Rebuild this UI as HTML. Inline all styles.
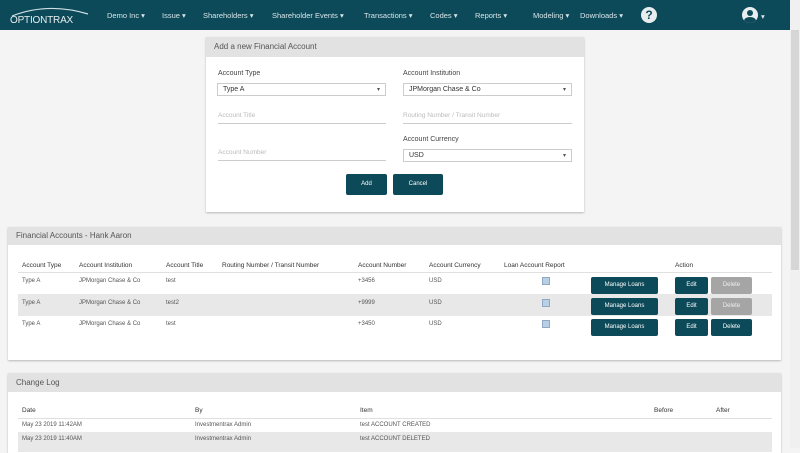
<!DOCTYPE html>
<html><head><style>
*{box-sizing:border-box;margin:0;padding:0}
body{width:800px;height:448px;overflow:hidden;background:#f4f4f4;font-family:"Liberation Sans",sans-serif;color:#333;position:relative;font-size:7px}
.a{position:absolute}
.nav{left:0;top:0;width:790px;height:30px;background:#0d4a59}
.nav span{position:absolute;top:11px;color:#d8e6ea;font-size:7.5px;white-space:nowrap}
.card{background:#fff;box-shadow:0 1px 2px rgba(0,0,0,.25)}
.hd{position:absolute;left:0;top:0;right:0;background:#e2e2e2;font-size:8px;color:#555;padding-left:8px}
.lbl{font-size:7px;color:#444}
.sel{border:1px solid #ccc;height:13px;font-size:7px;padding:2px 5px;background:#fff}
.sel:after{content:"▾";position:absolute;right:5px;top:2px;font-size:6px;color:#555}
.ph{font-size:6.5px;color:#bbb;border-bottom:1px solid #ccc;height:12px}
.btn{background:#0d4a59;color:#fff;font-size:6px;text-align:center;border-radius:2px}
.gbtn{background:#a5a5a5;color:#eee;font-size:6px;text-align:center;border-radius:2px}
.t{font-size:6px;color:#555;white-space:nowrap}
.th{font-size:6.5px;color:#333;white-space:nowrap}
.chk{width:8px;height:8px;background:#b8cfe6;border:1px solid #8fa9c4}
</style></head><body>
<div class="a nav">
<div class="a" style="left:8px;top:6px;width:84px;height:20px">
<svg width="84" height="20"><path d="M4 10 Q40 -4 80 8" stroke="#cfe0e4" stroke-width="1.2" fill="none"/><text x="2" y="17" fill="#e6eef0" font-size="10" font-family="Liberation Sans" letter-spacing="-.2">OPTIONTRAX</text></svg></div>
<span style="left:107px">Demo Inc ▾</span>
<span style="left:162px">Issue ▾</span>
<span style="left:203px">Shareholders ▾</span>
<span style="left:272px">Shareholder Events ▾</span>
<span style="left:364px">Transactions ▾</span>
<span style="left:430px">Codes ▾</span>
<span style="left:475px">Reports ▾</span>
<span style="left:533px">Modeling ▾</span>
<span style="left:580px">Downloads ▾</span>
<div class="a" style="left:641px;top:7px;width:16px;height:16px;border-radius:50%;background:#e8eef0;color:#0d4a59;font-weight:bold;font-size:12px;text-align:center;line-height:16px">?</div>
<div class="a" style="left:742px;top:7px;width:16px;height:16px;border-radius:50%;background:#e8eef0;overflow:hidden"><div class="a" style="left:5px;top:3px;width:6px;height:6px;border-radius:50%;background:#0d4a59"></div><div class="a" style="left:2px;top:10px;width:12px;height:8px;border-radius:50%;background:#0d4a59"></div></div>
<span style="left:761px;top:12px">▾</span>
</div>
<div class="a" style="left:790px;top:0;width:10px;height:448px;background:#f0f0f0"><div class="a" style="left:1px;top:30px;width:8px;height:240px;background:#d6d6d6"></div></div>

<div class="a card" style="left:206px;top:37px;width:378px;height:175px">
<div class="hd" style="height:20px;line-height:20px">Add a new Financial Account</div>
<div class="a lbl" style="left:12px;top:33px">Account Type</div>
<div class="a sel" style="left:11px;top:46px;width:169px">Type A</div>
<div class="a lbl" style="left:197px;top:33px">Account Institution</div>
<div class="a sel" style="left:197px;top:46px;width:169px">JPMorgan Chase &amp; Co</div>
<div class="a ph" style="left:12px;top:75px;width:168px">Account Title</div>
<div class="a ph" style="left:197px;top:75px;width:169px">Routing Number / Transit Number</div>
<div class="a lbl" style="left:197px;top:99px">Account Currency</div>
<div class="a ph" style="left:12px;top:112px;width:168px">Account Number</div>
<div class="a sel" style="left:197px;top:112px;width:169px">USD</div>
<div class="a btn" style="left:140px;top:137px;width:41px;height:21px;line-height:21px">Add</div>
<div class="a btn" style="left:187px;top:137px;width:50px;height:21px;line-height:21px">Cancel</div>
</div>

<div class="a card" style="left:8px;top:227px;width:773px;height:133px">
<div class="hd" style="height:18px;line-height:18px">Financial Accounts - Hank Aaron</div>
<div class="a th" style="left:14px;top:35px">Account Type</div>
<div class="a th" style="left:71px;top:35px">Account Institution</div>
<div class="a th" style="left:158px;top:35px">Account Title</div>
<div class="a th" style="left:214px;top:35px">Routing Number / Transit Number</div>
<div class="a th" style="left:350px;top:35px">Account Number</div>
<div class="a th" style="left:421px;top:35px">Account Currency</div>
<div class="a th" style="left:496px;top:35px">Loan Account Report</div>
<div class="a th" style="left:667px;top:35px">Action</div>
<div class="a" style="left:10px;top:45px;width:754px;height:1px;background:#e0e0e0"></div>
<div class="a" style="left:10px;top:67px;width:754px;height:22px;background:#e8e8e8"></div>
<div class="a t" style="left:14px;top:51px">Type A</div><div class="a t" style="left:71px;top:51px">JPMorgan Chase &amp; Co</div><div class="a t" style="left:158px;top:51px">test</div><div class="a t" style="left:350px;top:51px">+3456</div><div class="a t" style="left:421px;top:51px">USD</div>
<div class="a t" style="left:14px;top:73px">Type A</div><div class="a t" style="left:71px;top:73px">JPMorgan Chase &amp; Co</div><div class="a t" style="left:158px;top:73px">test2</div><div class="a t" style="left:350px;top:73px">+9999</div><div class="a t" style="left:421px;top:73px">USD</div>
<div class="a t" style="left:14px;top:94px">Type A</div><div class="a t" style="left:71px;top:94px">JPMorgan Chase &amp; Co</div><div class="a t" style="left:158px;top:94px">test</div><div class="a t" style="left:350px;top:94px">+3450</div><div class="a t" style="left:421px;top:94px">USD</div>
<div class="a chk" style="left:534px;top:50px"></div><div class="a chk" style="left:534px;top:72px"></div><div class="a chk" style="left:534px;top:93px"></div>
<div class="a btn" style="left:583px;top:50px;width:67px;height:17px;line-height:17px">Manage Loans</div>
<div class="a btn" style="left:583px;top:71px;width:67px;height:17px;line-height:17px">Manage Loans</div>
<div class="a btn" style="left:583px;top:92px;width:67px;height:17px;line-height:17px">Manage Loans</div>
<div class="a btn" style="left:667px;top:50px;width:33px;height:17px;line-height:17px">Edit</div>
<div class="a btn" style="left:667px;top:71px;width:33px;height:17px;line-height:17px">Edit</div>
<div class="a btn" style="left:667px;top:92px;width:33px;height:17px;line-height:17px">Edit</div>
<div class="a gbtn" style="left:703px;top:50px;width:41px;height:17px;line-height:17px">Delete</div>
<div class="a gbtn" style="left:703px;top:71px;width:41px;height:17px;line-height:17px">Delete</div>
<div class="a btn" style="left:703px;top:92px;width:41px;height:17px;line-height:17px">Delete</div>
</div>

<div class="a card" style="left:8px;top:373px;width:773px;height:80px">
<div class="hd" style="height:19px;line-height:19px">Change Log</div>
<div class="a th" style="left:14px;top:34px">Date</div>
<div class="a th" style="left:187px;top:34px">By</div>
<div class="a th" style="left:352px;top:34px">Item</div>
<div class="a th" style="left:646px;top:34px">Before</div>
<div class="a th" style="left:708px;top:34px">After</div>
<div class="a" style="left:10px;top:45px;width:754px;height:1px;background:#e0e0e0"></div>
<div class="a t" style="left:14px;top:49px">May 23 2019 11:42AM</div><div class="a t" style="left:187px;top:49px">Investmentrax Admin</div><div class="a t" style="left:352px;top:49px">test ACCOUNT CREATED</div>
<div class="a" style="left:10px;top:59px;width:754px;height:20px;background:#e8e8e8"></div>
<div class="a t" style="left:14px;top:63px">May 23 2019 11:40AM</div><div class="a t" style="left:187px;top:63px">Investmentrax Admin</div><div class="a t" style="left:352px;top:63px">test ACCOUNT DELETED</div>
</div>
</body></html>
